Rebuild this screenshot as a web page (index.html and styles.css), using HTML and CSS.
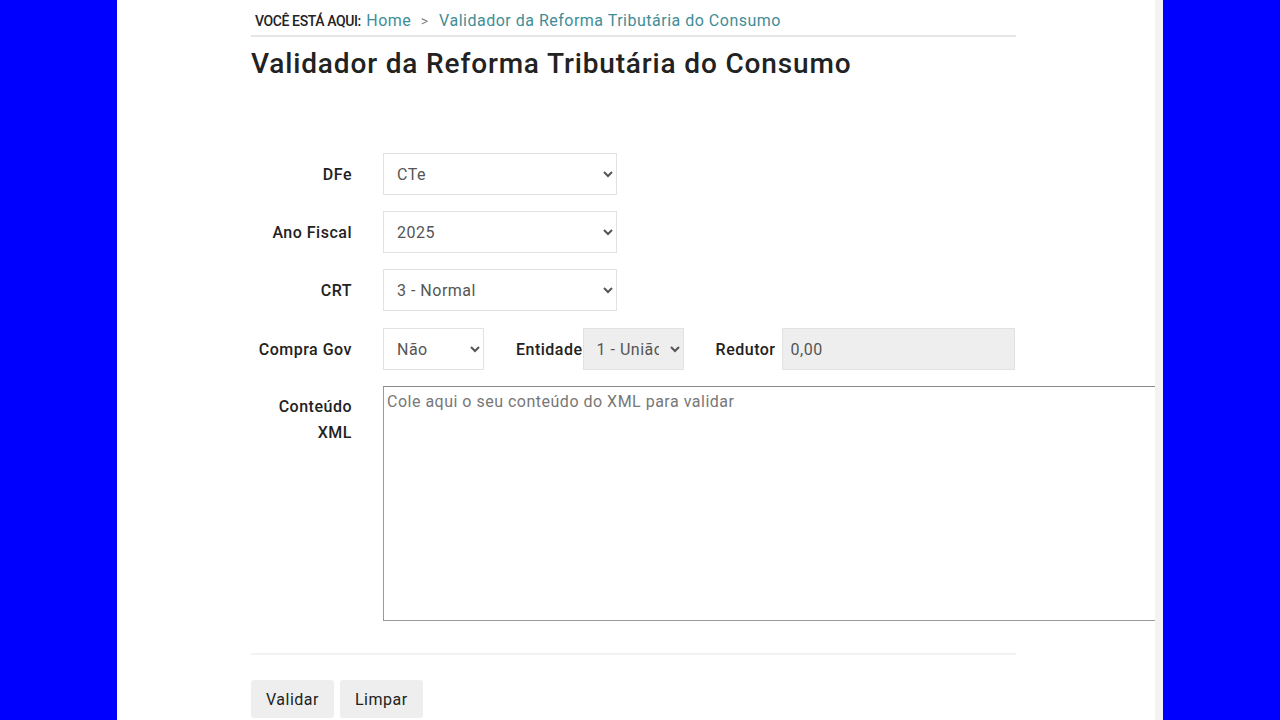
FILE: index.html
```html
<!DOCTYPE html>
<html lang="pt-BR">
<head>
<meta charset="utf-8">
<title>Validador da Reforma Tributária do Consumo</title>
<link rel="stylesheet" href="styles.css">
</head>
<body>
<div class="page">
  <div class="scroller">
    <main class="content">
      <nav class="breadcrumb">
        <span class="here">VOCÊ ESTÁ AQUI:</span>
        <a href="#" class="crumb">Home</a>
        <span class="sep">&gt;</span>
        <a href="#" class="crumb">Validador da Reforma Tributária do Consumo</a>
      </nav>
      <h1 class="title">Validador da Reforma Tributária do Consumo</h1>

      <form class="form">
        <div class="row">
          <label class="label">DFe</label>
          <div class="field">
            <select class="select wide"><option>CTe</option></select>
          </div>
        </div>
        <div class="row">
          <label class="label">Ano Fiscal</label>
          <div class="field">
            <select class="select wide"><option>2025</option></select>
          </div>
        </div>
        <div class="row row-last-select">
          <label class="label">CRT</label>
          <div class="field">
            <select class="select wide"><option>3 - Normal</option></select>
          </div>
        </div>
        <div class="row">
          <label class="label">Compra Gov</label>
          <div class="field inline">
            <select class="select small"><option>Não</option></select>
            <label class="inline-label ent">Entidade</label>
            <select class="select small disabled" disabled><option>1 - União</option></select>
            <label class="inline-label red">Redutor</label>
            <input class="input disabled" type="text" value="0,00" disabled>
          </div>
        </div>
        <div class="row xml-row">
          <label class="label xml-label">Conteúdo XML</label>
          <div class="field">
            <textarea class="textarea" placeholder="Cole aqui o seu conteúdo do XML para validar"></textarea>
          </div>
        </div>
        <hr class="divider">
        <div class="actions">
          <button type="button" class="btn">Validar</button>
          <button type="button" class="btn">Limpar</button>
        </div>
      </form>
    </main>
  </div>
  <div class="scrollbar"></div>
</div>
</body>
</html>
```
FILE: styles.css
```css
html, body {
  margin: 0;
  padding: 0;
  height: 100%;
}
body {
  background: #0000ff;
  font-family: Roboto, "Liberation Sans", Arial, sans-serif;
  color: #222;
  letter-spacing: 0.5px;
  overflow: hidden;
}
.page {
  margin-left: 117px;
  width: 1046px;
  height: 720px;
  background: #fff;
  display: flex;
}
.scroller {
  flex: 1;
  overflow: hidden;
}
.scrollbar {
  width: 8px;
  background: #f3f3f3;
}
.content {
  margin-left: 134px;
  width: 765px;
}
.breadcrumb {
  padding-top: 11px;
  height: 24px;
  border-bottom: 2px solid #e6e6e6;
  font-size: 16px;
  line-height: 20px;
  white-space: nowrap;
}
.here {
  font-size: 14px;
  font-weight: 500;
  letter-spacing: -0.4px;
  color: #222;
  margin-left: 4px;
  margin-right: 1px;
}
.crumb {
  color: #3f8d97;
  text-decoration: none;
}
.sep {
  color: #888;
  margin: 0 6px 0 5px;
  font-size: 14px;
}
.title {
  margin: 10px 0 0;
  font-size: 28px;
  line-height: 34px;
  font-weight: 500;
  letter-spacing: 0.85px;
  color: #222;
}
.form {
  margin-top: 72px;
}
.row {
  display: flex;
  align-items: center;
  margin-bottom: 16px;
}
.row.row-last-select {
  margin-bottom: 17px;
}
.label {
  width: 101px;
  padding-right: 31px;
  text-align: right;
  font-size: 16px;
  font-weight: 500;
  color: #222;
  flex-shrink: 0;
  white-space: nowrap;
}
.field {
  display: flex;
  align-items: center;
}
.select, .input {
  height: 42px;
  box-sizing: border-box;
  border: 1px solid #e2e2e2;
  background: #fff;
  font-family: Roboto, "Liberation Sans", Arial, sans-serif;
  font-size: 16px;
  letter-spacing: 0.5px;
  color: #555;
  padding: 0 8px 0 9px;
  border-radius: 0;
}
.select.wide { width: 234px; }
.select.small { width: 101px; }
.disabled,
.select:disabled,
.input:disabled {
  background: #eeeeee;
  color: #555;
  opacity: 1;
}
.inline-label {
  font-size: 16px;
  font-weight: 500;
  color: #222;
}
.inline-label.ent { margin-left: 32px; margin-right: 0; }
.inline-label.red { margin-left: 32px; margin-right: 6px; }
.input {
  width: 233px;
  padding-left: 8px;
  color: #666;
}
.xml-row {
  align-items: flex-start;
  margin-bottom: 32px;
}
.xml-label {
  line-height: 26px;
  padding-top: 8px;
  white-space: normal;
}
.textarea {
  width: 820px;
  height: 235px;
  box-sizing: border-box;
  border: 1px solid #9a9a9a;
  border-top-color: #8a8a8a;
  font-family: Roboto, "Liberation Sans", Arial, sans-serif;
  font-size: 16px;
  letter-spacing: 0.5px;
  padding: 5px 3px;
  resize: none;
  display: block;
}
.textarea::placeholder {
  color: #777;
}
.divider {
  border: 0;
  border-top: 2px solid #f2f2f2;
  margin: 0 0 25px;
}
.actions {
  display: flex;
  gap: 6px;
}
.btn {
  height: 38px;
  padding: 0 15px;
  border: 0;
  border-radius: 3px;
  background: #eeeeee;
  font-family: Roboto, "Liberation Sans", Arial, sans-serif;
  font-size: 16px;
  letter-spacing: 0.5px;
  color: #222;
}
```
